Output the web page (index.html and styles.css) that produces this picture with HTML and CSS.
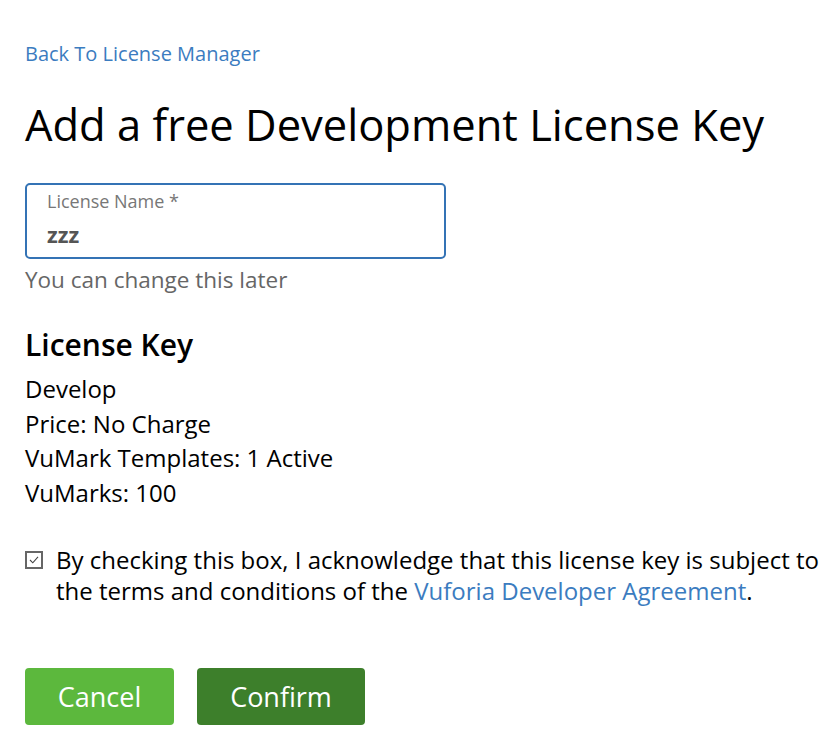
FILE: index.html
```html
<!DOCTYPE html>
<html>
<head>
<meta charset="utf-8">
<link rel="stylesheet" href="styles.css">
</head>
<body>
<div class="page">
  <a class="back" href="#">Back To License Manager</a>
  <h1 class="title">Add a free Development License Key</h1>
  <div class="field">
    <label class="field-label">License Name *</label>
    <div class="field-value">zzz</div>
  </div>
  <div class="hint">You can change this later</div>
  <h2 class="section">License Key</h2>
  <div class="details">
    <div>Develop</div>
    <div>Price: No Charge</div>
    <div>VuMark Templates: 1 Active</div>
    <div>VuMarks: 100</div>
  </div>
  <div class="agree">
    <span class="checkbox">
      <svg width="18" height="18" viewBox="0 0 18 18"><rect x="1" y="1" width="16" height="16" fill="#fff" stroke="#666" stroke-width="2"/><path d="M5 9 L7.8 11.8 L13 5.8" fill="none" stroke="#444" stroke-width="1.1"/></svg>
    </span>
    <p class="agree-text">By checking this box, I acknowledge that this license key is subject to the terms and conditions of the <a href="#">Vuforia Developer Agreement</a>.</p>
  </div>
  <div class="actions">
    <button class="btn btn-cancel">Cancel</button>
    <button class="btn btn-confirm">Confirm</button>
  </div>
</div>
</body>
</html>
```
FILE: styles.css
```css
html, body { margin: 0; padding: 0; background: #fff; }
body { font-family: "Open Sans", sans-serif; color: #000; }
.page { padding: 41px 0 0 25px; }
.back { display: block; font-size: 20px; line-height: 26px; color: #3b7cc0; text-decoration: none; }
.title { margin: 28px 0 0; font-size: 43.5px; font-weight: 400; line-height: 60px; }
.field { margin-top: 28px; box-sizing: border-box; width: 421px; height: 76px; border: 2px solid #3473b5; border-radius: 5px; padding: 4px 20px 0; }
.field-label { display: block; font-size: 18px; line-height: 24px; color: #777; }
.field-value { font-size: 22px; font-weight: 700; color: #555; line-height: 30px; margin-top: 6px; }
.hint { font-size: 22.5px; color: #666; line-height: 30px; margin-top: 6px; }
.section { margin: 30px 0 0; font-size: 30px; font-weight: 600; line-height: 40px; }
.details { margin-top: 7px; font-size: 24px; line-height: 34.5px; }
.agree { display: flex; align-items: flex-start; margin-top: 34px; gap: 13px; }
.checkbox { display: block; padding-top: 7px; line-height: 0; }
.agree-text { margin: 0; font-size: 24px; line-height: 31px; flex: 1; }
.agree-text a { color: #3b7cc0; text-decoration: none; }
.actions { display: flex; gap: 23px; margin-top: 62px; }
.btn { border: none; border-radius: 4px; color: #fff; font-family: "Open Sans", sans-serif; font-size: 27px; height: 57px; padding: 0; cursor: pointer; }
.btn-cancel { background: #5cb83d; width: 149px; }
.btn-confirm { background: #3d7f2b; width: 168px; }
```
